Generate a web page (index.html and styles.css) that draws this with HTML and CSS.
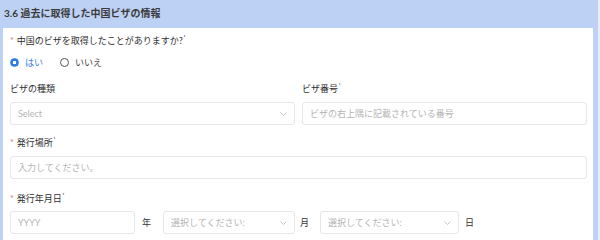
FILE: index.html
```html
<!DOCTYPE html>
<html>

<head>
    <title>過去に取得した中国ビザの情報</title>
    <meta name="viewport" content="width=device-width, initial-scale=1.0">
    <link rel="stylesheet" href="styles.css">
</head>

<body>
    <section class="block">
        <h2 class="block-title">3.6 過去に取得した中国ビザの情報</h2>
        <div class="panel">
            <div class="field">
                <label class="label"><span class="req">*</span>中国のビザを取得したことがありますか?<sup class="mark">'</sup></label>
                <div class="radios">
                    <span class="radio checked"><i class="dot"></i>はい</span>
                    <span class="radio"><i class="dot"></i>いいえ</span>
                </div>
            </div>

            <div class="cols">
                <div class="field">
                    <label class="label">ビザの種類</label>
                    <div class="box select">
                        <span class="ph">Select</span>
                        <svg class="chev" width="7" height="4" viewBox="0 0 7 4"><polyline points="0.5,0.5 3.5,3.5 6.5,0.5" /></svg>
                    </div>
                </div>
                <div class="field">
                    <label class="label">ビザ番号<sup class="mark">'</sup></label>
                    <div class="box">
                        <span class="ph">ビザの右上隅に記載されている番号</span>
                    </div>
                </div>
            </div>

            <div class="field">
                <label class="label"><span class="req">*</span>発行場所<sup class="mark">'</sup></label>
                <div class="box">
                    <span class="ph">入力してください。</span>
                </div>
            </div>

            <div class="field">
                <label class="label"><span class="req">*</span>発行年月日<sup class="mark">'</sup></label>
                <div class="date">
                    <div class="box year"><span class="ph">YYYY</span></div>
                    <span class="unit unit-year">年</span>
                    <div class="box select month">
                        <span class="ph">選択してください:</span>
                        <svg class="chev" width="7" height="4" viewBox="0 0 7 4"><polyline points="0.5,0.5 3.5,3.5 6.5,0.5" /></svg>
                    </div>
                    <span class="unit unit-month">月</span>
                    <div class="box select day">
                        <span class="ph">選択してください:</span>
                        <svg class="chev" width="7" height="4" viewBox="0 0 7 4"><polyline points="0.5,0.5 3.5,3.5 6.5,0.5" /></svg>
                    </div>
                    <span class="unit unit-day">日</span>
                </div>
            </div>
        </div>
    </section>
</body>

</html>
```

FILE: styles.css
```css
body {
    margin: 0;
    background-color: #e9edf4;
    font-family: Lato, "Noto Sans CJK JP", sans-serif;
    color: #333;
}

.block {
    width: 598px;
    height: 240px;
    background-color: #bdd1f5;
}

.block-title {
    margin: 0;
    height: 28px;
    line-height: 26px;
    padding-left: 4px;
    font-size: 10px;
    font-weight: bold;
    color: #3a3a3a;
}

.panel {
    margin: 0 5px 0 3px;
    height: 212px;
    background-color: #fff;
    padding: 6px 6px 0 7px;
    box-sizing: border-box;
}

.label {
    display: block;
    height: 14px;
    line-height: 14px;
    font-size: 9px;
    color: #2e2e2e;
}

.req {
    color: #f07070;
    margin-right: 3px;
}

.mark {
    font-size: 7px;
    line-height: 0;
    vertical-align: 3px;
    margin-left: 1px;
}

.radios {
    display: flex;
    gap: 17px;
    margin-top: 7px;
    height: 14px;
    align-items: center;
    font-size: 9px;
}

.radio {
    display: flex;
    align-items: center;
    gap: 6px;
    color: #444;
}

.radio .dot {
    width: 7px;
    height: 7px;
    border: 1px solid #555;
    border-radius: 50%;
}

.radio.checked {
    color: #3b82e6;
}

.radio.checked .dot {
    border-color: #2f7ee3;
    background: radial-gradient(circle, #fff 0 1.6px, #2f7ee3 2px);
}

.field + .field {
    margin-top: 13px;
}

.cols {
    display: grid;
    grid-template-columns: 285px 285px;
    gap: 7px;
    margin-top: 13px;
}

.cols .field {
    margin-top: 0;
}

.cols + .field {
    margin-top: 11px;
}

.box {
    margin-top: 6px;
    height: 23px;
    border: 1px solid #e6e6e6;
    border-radius: 3px;
    box-sizing: border-box;
    display: flex;
    align-items: center;
    padding: 0 7px;
    font-size: 9px;
}

.ph {
    color: #b4b4b4;
    flex: 1;
}

.chev {
    fill: none;
    stroke: #c4c4c4;
    stroke-width: 1;
}

.date {
    display: flex;
    align-items: center;
    margin-top: 5px;
}

.date .box {
    margin-top: 0;
    height: 23px;
}

.year {
    width: 125px;
}

.month {
    width: 132px;
}

.day {
    width: 139px;
}

.unit {
    font-size: 9px;
    flex-shrink: 0;
}

.unit-year {
    margin: 0 12px 0 7px;
}

.unit-month {
    margin: 0 11px 0 5px;
}

.unit-day {
    margin-left: 6px;
}
```
